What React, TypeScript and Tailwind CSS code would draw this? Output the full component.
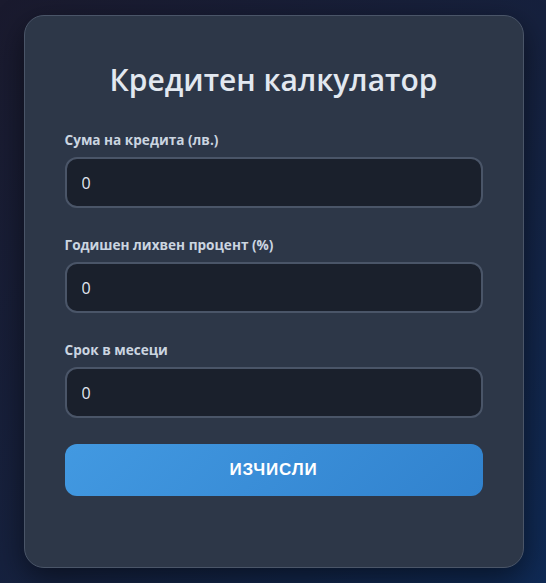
import { useState } from 'react';

const fields = [
  { id: 'amount', label: 'Сума на кредита (лв.)' },
  { id: 'rate', label: 'Годишен лихвен процент (%)' },
  { id: 'months', label: 'Срок в месеци' },
];

export default function App() {
  const [values, setValues] = useState<Record<string, string>>({ amount: '0', rate: '0', months: '0' });

  return (
    <div className="min-h-screen flex items-center justify-center pl-px bg-[linear-gradient(135deg,#1a1a2e_0%,#16213e_50%,#0f2a55_100%)] font-['Open_Sans',sans-serif]">
      <div className="w-[500px] h-[553px] bg-[#2d3748] border border-[#4a5568] rounded-[20px] px-10 pt-[42px] shadow-[0_10px_30px_rgba(0,0,0,0.5)]">
        <h2 className="text-center text-[30px] leading-[44px] font-semibold text-[#e2e8f0] mb-[28px]">
          Кредитен калкулатор
        </h2>

        {fields.map((f) => (
          <div key={f.id} className="mb-[27px]">
            <label htmlFor={f.id} className="block text-[13.6px] leading-[20px] font-bold text-[#cbd5e0] mb-[7px]">
              {f.label}
            </label>
            <input
              id={f.id}
              type="number"
              value={values[f.id]}
              onChange={(e) => setValues({ ...values, [f.id]: e.target.value })}
              className="w-full h-[51px] px-[15px] bg-[#1a202c] border-2 border-[#4a5568] rounded-xl text-[16px] text-[#e2e8f0] outline-none"
            />
          </div>
        ))}

        <button className="w-full h-[52px] -mt-px rounded-xl bg-[linear-gradient(135deg,#4299e1,#3182ce)] text-white text-[17px] font-bold uppercase tracking-[0.8px] font-['Liberation_Sans',Arial,sans-serif]">
          Изчисли
        </button>
      </div>
    </div>
  );
}
